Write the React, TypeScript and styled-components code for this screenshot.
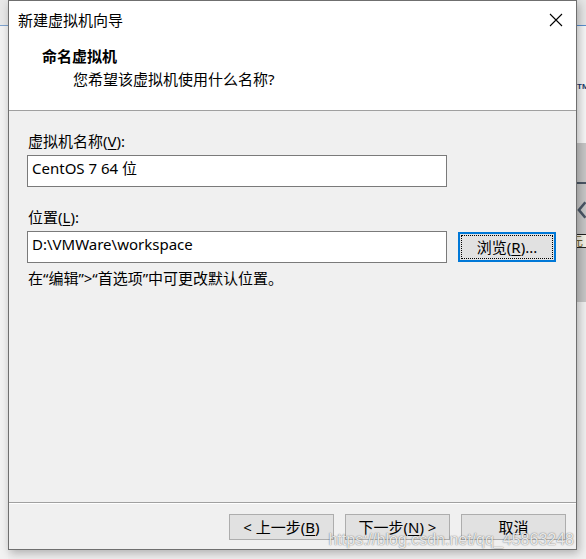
import styled, { createGlobalStyle } from 'styled-components'

const GlobalStyle = createGlobalStyle`
  html, body {
    margin: 0;
    padding: 0;
    background: #f0f0f0;
    overflow: hidden;
  }
  * {
    box-sizing: border-box;
  }
`

const uiFont = `"Noto Sans", "Noto Sans CJK SC", sans-serif`

const Stage = styled.div`
  width: 586px;
  height: 559px;
  display: flex;
  align-items: flex-start;
  background: #f0f0f0;
  font-family: ${uiFont};
  font-size: 15px;
  color: #000;
`

const EdgeStrip = styled.div<{ $width: number }>`
  width: ${(p) => p.$width}px;
  height: 559px;
  flex-shrink: 0;
  display: flex;
  flex-direction: column;
  overflow: hidden;
`

const EdgePart = styled.div<{ $h?: number; $bg: string }>`
  height: ${(p) => (p.$h ? `${p.$h}px` : 'auto')};
  flex: ${(p) => (p.$h ? '0 0 auto' : '1')};
  background: ${(p) => p.$bg};
`

const TmPart = styled.div`
  height: 117px;
  background: #f6f6f6;
  padding-top: 56px;
  font-family: "Liberation Sans", sans-serif;
  font-size: 8px;
  font-weight: 700;
  color: #213a6b;
  line-height: 10px;
  white-space: nowrap;
`

const GreyPart = styled.div`
  height: 159px;
  background: #c6c6c6;
  display: flex;
  flex-direction: column;
  padding-top: 39px;
`

const DarkBar = styled.div`
  height: 2px;
  background: #4b5665;
`

const ArrowWrap = styled.div`
  height: 40px;
  display: flex;
  align-items: center;
  margin-top: 6px;
`

const YuanStrip = styled.div`
  height: 14px;
  margin-top: 4px;
  border-top: 1px solid #222;
  border-bottom: 1px solid #222;
  background: #f4f1e6;
  font-family: "Noto Sans CJK SC", sans-serif;
  font-size: 12px;
  line-height: 12px;
  color: #6b5a2a;
  white-space: nowrap;
  text-indent: -6px;
`

const Dialog = styled.div`
  position: relative;
  z-index: 1;
  width: 569px;
  height: 550px;
  flex-shrink: 0;
  display: flex;
  flex-direction: column;
  border: 1px solid #6f6f6f;
  background: #f0f0f0;
  box-shadow: 2px 3px 9px rgba(0, 0, 0, 0.28);
`

const Header = styled.div`
  height: 110px;
  flex-shrink: 0;
  background: #fff;
  border-bottom: 1px solid #a0a0a0;
  display: flex;
  flex-direction: column;
`

const TitleRow = styled.div`
  height: 38px;
  display: flex;
  align-items: center;
  justify-content: space-between;
  padding-left: 9px;
`

const TitleText = styled.span`
  font-size: 15px;
  line-height: 20px;
`

const CloseButton = styled.div`
  width: 40px;
  height: 38px;
  display: flex;
  align-items: center;
  justify-content: center;
`

const Heading = styled.div`
  margin-top: 7px;
  padding-left: 33px;
  font-size: 15px;
  font-weight: 700;
  line-height: 20px;
`

const SubHeading = styled.div`
  margin-top: 3px;
  padding-left: 64px;
  font-size: 15px;
  line-height: 20px;
`

const Body = styled.div`
  flex: 1;
  display: flex;
  flex-direction: column;
  padding: 20px 0 0 18px;
`

const FieldLabel = styled.div<{ $gap?: number }>`
  margin-top: ${(p) => p.$gap ?? 0}px;
  padding-left: 1px;
  line-height: 20px;
`

const Mnemonic = styled.span`
  text-decoration: underline;
  text-underline-offset: 2px;
  text-decoration-thickness: 1px;
`

const FieldRow = styled.div`
  margin-top: 4px;
  display: flex;
  align-items: center;
  gap: 11px;
`

const TextBox = styled.div`
  width: 420px;
  height: 32px;
  background: #fff;
  border: 1px solid #7a7a7a;
  padding: 2px 0 0 4px;
  line-height: 20px;
  white-space: nowrap;
`

const FocusButton = styled.div`
  position: relative;
  width: 98px;
  height: 30px;
  background: #e1e1e1;
  border: 2px solid #0078d7;
  display: flex;
  align-items: center;
  justify-content: center;
  line-height: 20px;

  &::before {
    content: '';
    position: absolute;
    inset: 1px;
    border: 1px dotted #000;
  }
`

const Hint = styled.div`
  margin-top: 5px;
  padding-left: 1px;
  line-height: 20px;
`

const Footer = styled.div`
  height: 47px;
  flex-shrink: 0;
  border-top: 1px solid #a0a0a0;
  box-shadow: inset 0 1px 0 #fff;
  display: flex;
  justify-content: flex-end;
  align-items: flex-start;
  gap: 11px;
  padding: 11px 10px 0 0;
`

const WizardButton = styled.div`
  width: 105px;
  height: 26px;
  background: #e1e1e1;
  border: 1px solid #adadad;
  display: flex;
  align-items: center;
  justify-content: center;
  line-height: 20px;
  white-space: nowrap;
`

const Watermark = styled.div`
  position: absolute;
  right: 2px;
  bottom: 0px;
  font-family: "Liberation Sans", Arial, sans-serif;
  font-size: 16px;
  line-height: 18px;
  color: rgba(255, 255, 255, 0.85);
  text-shadow: 0 0 1px rgba(0, 0, 0, 0.5), 0 0 2px rgba(0, 0, 0, 0.2);
  white-space: nowrap;
  pointer-events: none;
`

function CloseIcon() {
  return (
    <svg width="14" height="14" viewBox="0 0 14 14">
      <path d="M1 1 L13 13 M13 1 L1 13" stroke="#000" strokeWidth="1.1" fill="none" />
    </svg>
  )
}

function BackArrow() {
  return (
    <svg width="14" height="30" viewBox="0 0 14 30">
      <path d="M13 3 L3 15 L13 27" stroke="#4b5665" strokeWidth="4" fill="none" />
    </svg>
  )
}

export default function App() {
  return (
    <>
      <GlobalStyle />
      <Stage>
        <EdgeStrip $width={8}>
          <EdgePart $h={25} $bg="#e8e8e8" />
          <EdgePart $h={1} $bg="#7ea3cf" />
          <EdgePart $bg="#f2f2f2" />
        </EdgeStrip>

        <Dialog>
          <Header>
            <TitleRow>
              <TitleText>新建虚拟机向导</TitleText>
              <CloseButton>
                <CloseIcon />
              </CloseButton>
            </TitleRow>
            <Heading>命名虚拟机</Heading>
            <SubHeading>您希望该虚拟机使用什么名称?</SubHeading>
          </Header>

          <Body>
            <FieldLabel>
              虚拟机名称(<Mnemonic>V</Mnemonic>):
            </FieldLabel>
            <FieldRow>
              <TextBox>CentOS 7 64 位</TextBox>
            </FieldRow>

            <FieldLabel $gap={20}>
              位置(<Mnemonic>L</Mnemonic>):
            </FieldLabel>
            <FieldRow>
              <TextBox>D:\VMWare\workspace</TextBox>
              <FocusButton>
                浏览(<Mnemonic>R</Mnemonic>)...
              </FocusButton>
            </FieldRow>

            <Hint>在“编辑”&gt;“首选项”中可更改默认位置。</Hint>
          </Body>

          <Footer>
            <WizardButton>
              &lt; 上一步(<Mnemonic>B</Mnemonic>)
            </WizardButton>
            <WizardButton>
              下一步(<Mnemonic>N</Mnemonic>) &gt;
            </WizardButton>
            <WizardButton>取消</WizardButton>
          </Footer>

          <Watermark>https://blog.csdn.net/qq_45863248</Watermark>
        </Dialog>

        <EdgeStrip $width={9}>
          <EdgePart $h={25} $bg="#e6e6e6" />
          <EdgePart $h={1} $bg="#5a8fd0" />
          <TmPart>TM</TmPart>
          <GreyPart>
            <DarkBar />
            <ArrowWrap>
              <BackArrow />
            </ArrowWrap>
            <YuanStrip>元</YuanStrip>
          </GreyPart>
          <EdgePart $bg="#f0f0f0" />
        </EdgeStrip>
      </Stage>
    </>
  )
}
